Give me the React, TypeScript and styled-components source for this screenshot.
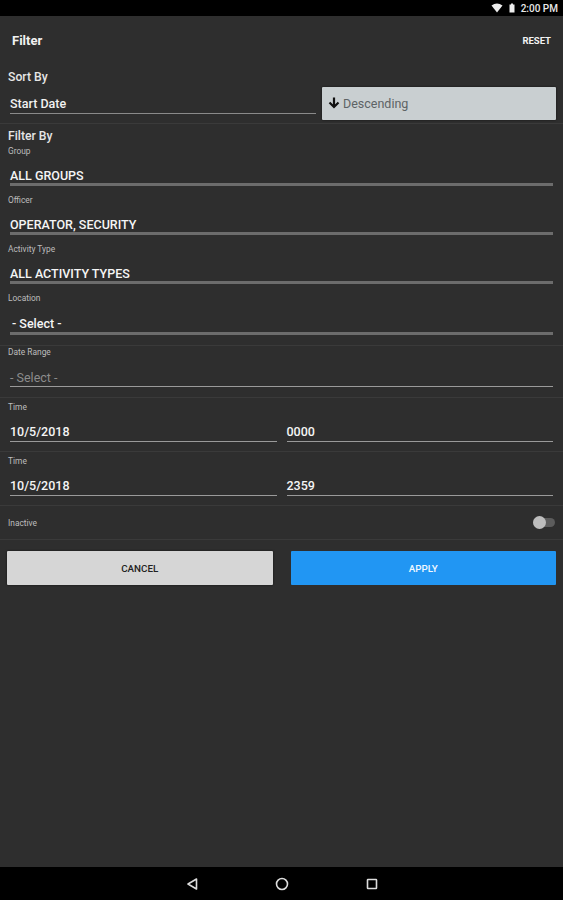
import React from "react";
import styled, { createGlobalStyle } from "styled-components";

const Global = createGlobalStyle`
  html, body { margin: 0; padding: 0; background: #2e2e2e; }
  body { font-family: Roboto, "Liberation Sans", sans-serif; }
`;

const Page = styled.div`
  width: 563px;
  height: 900px;
  display: flex;
  flex-direction: column;
  background: #2e2e2e;
  color: #f2f2f2;
  overflow: hidden;
`;

const StatusBar = styled.div`
  height: 16px;
  background: #000;
  display: flex;
  align-items: center;
  justify-content: flex-end;
  padding-right: 5px;
  gap: 6px;
  font-size: 10px;
  font-weight: 500;
  color: #e8e8e8;
`;

const Header = styled.div`
  height: 48px;
  display: flex;
  align-items: center;
  justify-content: space-between;
  padding: 0 12px;
`;

const Title = styled.div`
  font-size: 13px;
  font-weight: 700;
`;

const Reset = styled.div`
  font-size: 9.5px;
  font-weight: 700;
`;

const Content = styled.div`
  flex: 1;
  display: flex;
  flex-direction: column;
`;

const SectionTitle = styled.div<{ $top: number; $bottom: number }>`
  font-size: 12.2px;
  font-weight: 500;
  line-height: 14px;
  padding-left: 8px;
  margin: ${(p) => p.$top}px 0 ${(p) => p.$bottom}px;
  color: #e6e6e6;
`;

const SortRow = styled.div`
  height: 40px;
  box-sizing: border-box;
  display: flex;
  gap: 6px;
  padding: 3px 7px 0 10px;
  border-bottom: 1px solid #3a3a3a;
`;

const SortField = styled.div`
  flex: 0 0 306px;
  height: 27px;
  box-sizing: border-box;
  padding-top: 8px;
  border-bottom: 1px solid #8a8a8a;
  font-size: 12.5px;
  font-weight: 500;
  line-height: 18px;
`;

const OrderButton = styled.div`
  flex: 1;
  height: 33px;
  box-sizing: border-box;
  display: flex;
  align-items: center;
  gap: 2px;
  padding: 0 0 1px 5px;
  background: #c9cfd1;
  color: #5d6365;
  font-size: 12.5px;
  border-radius: 1px;
  box-shadow: 0 0 2px #111;
`;

const Group = styled.div<{ $h: number; $top?: number; $divider?: boolean }>`
  height: ${(p) => p.$h}px;
  box-sizing: border-box;
  display: flex;
  flex-direction: column;
  padding: ${(p) => p.$top || 0}px 10px 0 8px;
  ${(p) => (p.$divider ? "border-bottom: 1px solid #3a3a3a;" : "")}
`;

const Label = styled.div`
  font-size: 8.4px;
  line-height: 10px;
  color: #bdbdbd;
`;

const Value = styled.div<{ $muted?: boolean; $indent?: number; $gap?: number }>`
  margin-top: ${(p) => p.$gap ?? 11}px;
  padding-left: ${(p) => 2 + (p.$indent || 0)}px;
  font-size: 12.5px;
  font-weight: ${(p) => (p.$muted ? 400 : 500)};
  line-height: 18px;
  color: ${(p) => (p.$muted ? "#8c8c8c" : "#f5f5f5")};
  white-space: nowrap;
`;

const ThickLine = styled.div<{ $pull?: number }>`
  height: 3px;
  margin: ${(p) => -(p.$pull ?? 2)}px 0 0 2px;
  background: #6c6c6c;
`;

const ThinLine = styled.div<{ $pull?: number }>`
  height: 1px;
  margin: ${(p) => -(p.$pull ?? 0)}px 0 0 2px;
  background: #9a9a9a;
`;

const TwoCols = styled.div`
  display: flex;
  gap: 8px;
  & > div { flex: 1; }
`;

const ToggleRow = styled.div`
  height: 34px;
  box-sizing: border-box;
  display: flex;
  align-items: center;
  justify-content: space-between;
  padding: 0 8px;
  border-bottom: 1px solid #3a3a3a;
`;

const Track = styled.div`
  position: relative;
  width: 22px;
  height: 9px;
  border-radius: 5px;
  background: #5c5c5c;
`;

const Thumb = styled.div`
  position: absolute;
  left: 0;
  top: -2px;
  width: 13px;
  height: 13px;
  border-radius: 50%;
  background: #bdbdbd;
`;

const Buttons = styled.div`
  display: flex;
  gap: 18px;
  padding: 11px 7px 0;
`;

const ActionButton = styled.div<{ $primary?: boolean }>`
  flex: 1;
  height: 34px;
  display: flex;
  align-items: center;
  justify-content: center;
  background: ${(p) => (p.$primary ? "#2196f3" : "#d6d6d6")};
  color: ${(p) => (p.$primary ? "#f0f8ff" : "#222")};
  font-size: 9.8px;
  font-weight: 500;
  border-radius: 1px;
  box-shadow: ${(p) => (p.$primary ? "none" : "0 0 2px #111")};
`;

const NavBar = styled.div`
  height: 33px;
  background: #000;
  display: flex;
  align-items: center;
  justify-content: center;
  gap: 76px;
  padding-left: 1px;
`;

const Field = ({ label, value, muted, indent, h, top, divider, gap }: {
  label: string; value: string; muted?: boolean; indent?: number; h: number; top?: number; divider?: boolean; gap?: number;
}) => (
  <Group $h={h} $top={top} $divider={divider}>
    <Label>{label}</Label>
    <Value $muted={muted} $indent={indent} $gap={gap}>{value}</Value>
    {muted ? <ThinLine $pull={1} /> : <ThickLine $pull={gap ? 1 : 2} />}
  </Group>
);

const DateTime = ({ date, time }: { date: string; time: string }) => (
  <Group $h={54} $top={4} $divider>
    <Label>Time</Label>
    <TwoCols>
      <div>
        <Value>{date}</Value>
        <ThinLine />
      </div>
      <div>
        <Value>{time}</Value>
        <ThinLine />
      </div>
    </TwoCols>
  </Group>
);

export default function App() {
  return (
    <Page>
      <Global />
      <StatusBar>
        <svg width="12" height="10" viewBox="0 0 12 10"><path d="M0.500 2.500 L6 9.500 L11.500 2.500 Q6 -1.500 0.500 2.500Z" fill="#eee" /></svg>
        <svg width="6" height="10" viewBox="0 0 6 10"><path d="M2 0.500h2v1h1.500v8h-5v-8H2z" fill="#eee" /></svg>
        <span>2:00 PM</span>
      </StatusBar>
      <Header>
        <Title>Filter</Title>
        <Reset>RESET</Reset>
      </Header>
      <Content>
        <SectionTitle $top={6} $bottom={0}>Sort By</SectionTitle>
        <SortRow>
          <SortField>Start Date</SortField>
          <OrderButton>
            <svg width="14" height="12" viewBox="0 0 14 12"><path d="M7 0.500v9.500M2.500 5.500L7 10l4.500-4.500" fill="none" stroke="#111" strokeWidth="2.200" /></svg>
            Descending
          </OrderButton>
        </SortRow>
        <SectionTitle $top={5} $bottom={3}>Filter By</SectionTitle>
        <Field h={49} label="Group" value="ALL GROUPS" />
        <Field h={49} label="Officer" value="OPERATOR, SECURITY" />
        <Field h={49} label="Activity Type" value="ALL ACTIVITY TYPES" />
        <Field h={53} label="Location" value="- Select -" indent={2} gap={12} divider />
        <Field h={52} top={1} label="Date Range" value="- Select -" muted gap={12} divider />
        <DateTime date="10/5/2018" time="0000" />
        <DateTime date="10/5/2018" time="2359" />
        <ToggleRow>
          <Label>Inactive</Label>
          <Track><Thumb /></Track>
        </ToggleRow>
        <Buttons>
          <ActionButton>CANCEL</ActionButton>
          <ActionButton $primary>APPLY</ActionButton>
        </Buttons>
      </Content>
      <NavBar>
        <svg width="14" height="14" viewBox="0 0 14 14"><path d="M11.500 2 L3 7 L11.500 12Z" fill="none" stroke="#ddd" strokeWidth="1.600" strokeLinejoin="round" /></svg>
        <svg width="14" height="14" viewBox="0 0 14 14"><circle cx="7" cy="7" r="5.500" fill="none" stroke="#ddd" strokeWidth="1.600" /></svg>
        <svg width="14" height="14" viewBox="0 0 14 14"><rect x="2.500" y="2.500" width="9" height="9" rx="0.500" fill="none" stroke="#ddd" strokeWidth="1.600" /></svg>
      </NavBar>
    </Page>
  );
}
